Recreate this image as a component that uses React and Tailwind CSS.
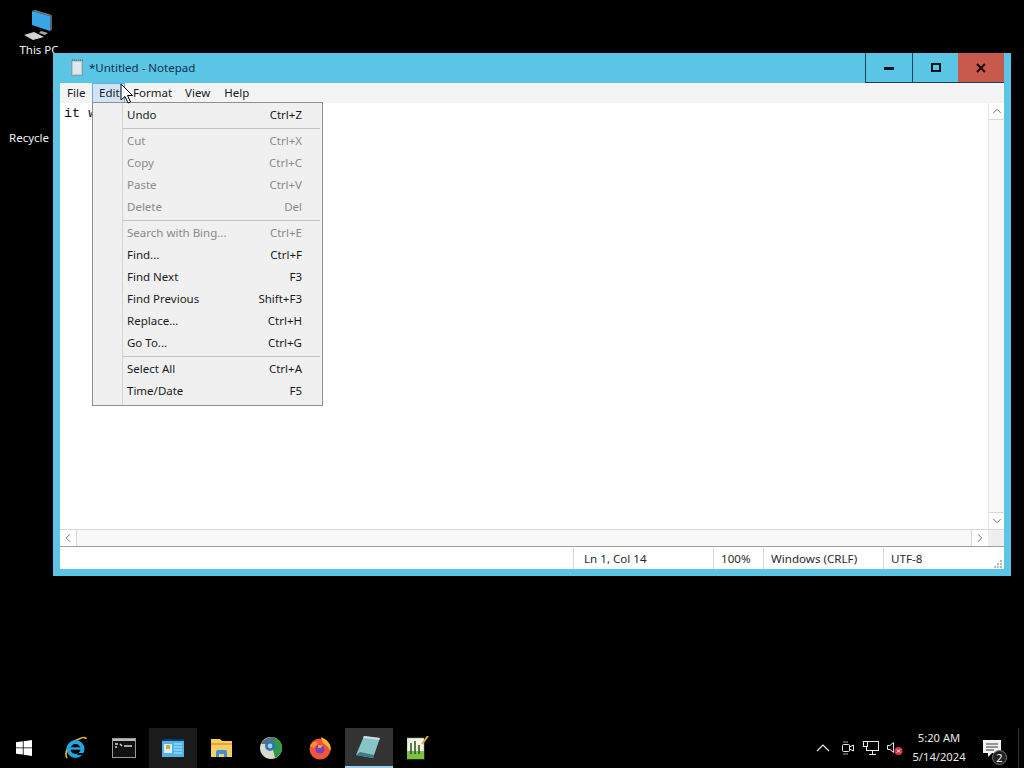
import React from 'react';
import { ChevronUp, ChevronDown, ChevronLeft, ChevronRight } from 'lucide-react';

const uiFont = "[font-family:'Noto_Sans','Open_Sans',sans-serif]";

const menuGroups = [
  [{ label: 'Undo', keys: 'Ctrl+Z' }],
  [
    { label: 'Cut', keys: 'Ctrl+X', disabled: true },
    { label: 'Copy', keys: 'Ctrl+C', disabled: true },
    { label: 'Paste', keys: 'Ctrl+V', disabled: true },
    { label: 'Delete', keys: 'Del', disabled: true },
  ],
  [
    { label: 'Search with Bing...', keys: 'Ctrl+E', disabled: true },
    { label: 'Find...', keys: 'Ctrl+F' },
    { label: 'Find Next', keys: 'F3' },
    { label: 'Find Previous', keys: 'Shift+F3' },
    { label: 'Replace...', keys: 'Ctrl+H' },
    { label: 'Go To...', keys: 'Ctrl+G' },
  ],
  [
    { label: 'Select All', keys: 'Ctrl+A' },
    { label: 'Time/Date', keys: 'F5' },
  ],
];

const PcIcon = () => (
  <svg width="36" height="36" viewBox="0 0 36 36" className="mr-[4px]">
    <path d="M13 3 L31 8 V23 L13 17 Z" fill="#3aa6e8" />
    <path d="M13 3 L16 2 L33 7 L31 8 Z" fill="#6b7c88" />
    <path d="M31 8 L33 7 V22 L31 23 Z" fill="#54636e" />
    <path d="M5 27 L15 24 L25 29 L14 32 Z" fill="#d2d2d2" />
    <path d="M22 23 L29 25 L26 27 L20 25 Z" fill="#a8a8a8" />
  </svg>
);

const NotepadIcon = () => (
  <svg width="16" height="18" viewBox="0 0 16 18">
    <rect x="2.5" y="1.5" width="11" height="15" fill="#b4ccd4" stroke="#8b9ea6" />
    <rect x="4" y="3" width="8" height="12" fill="#dbe8ec" />
    <path d="M3 1 H14" stroke="#555" strokeDasharray="1 1" />
  </svg>
);

const Cursor = () => (
  <svg width="14" height="22" viewBox="0 0 14 22" className="absolute left-[120px] top-[83px]">
    <path d="M1 1 V17 L5 13.5 L8 20 L10.5 19 L7.5 12.5 L12.5 12.5 Z" fill="#fff" stroke="#000" />
  </svg>
);

const MenuBar = () => (
  <div className={`flex h-5 items-center bg-[#f4f4f4] text-[11.5px] text-[#1a1a1a] ${uiFont}`}>
    <span className="w-[32px] pl-[7px]">File</span>
    <span className="flex h-5 w-[33px] items-center border border-[#6aa9dd] bg-[#cfe4f7] pl-[6px]">Edit</span>
    <span className="ml-[8px]">Format</span>
    <span className="ml-[13px]">View</span>
    <span className="ml-[14px]">Help</span>
  </div>
);

const EditMenu = () => (
  <div className={`absolute left-[92px] top-[102px] w-[231px] border border-[#8f8f8f] bg-[#f0f0f0] pb-[3px] pt-[1px] text-[11.5px] ${uiFont}`}>
    <div className="absolute bottom-0 left-[29px] top-0 w-px bg-[#d4d4d4]" />
    {menuGroups.map((group, i) => (
      <div key={i}>
        {i > 0 && <div className="my-[1px] ml-[30px] mr-[2px] h-[2px] border-b border-[#c4c4c4]" />}
        {group.map((item) => (
          <div
            key={item.label}
            className={`flex h-[22px] items-center justify-between pl-[34px] pr-[20px] ${item.disabled ? 'text-[#8a8a8a]' : 'text-[#1a1a1a]'}`}
          >
            <span>{item.label}</span>
            <span>{item.keys}</span>
          </div>
        ))}
      </div>
    ))}
  </div>
);

const ScrollButton = ({ Icon, className = '' }) => (
  <div className={`flex items-center justify-center bg-white text-[#606060] ${className}`}>
    <Icon size={14} strokeWidth={1.5} />
  </div>
);

const StatusBar = () => (
  <div className={`flex h-[23px] items-center border-t border-[#a0a0a0] bg-white pt-px text-[11.6px] text-[#2a2a2a] ${uiFont}`}>
    <div className="w-[513px]" />
    <div className="flex h-full w-[140px] items-center border-l border-[#d8d8d8] pl-[10px]">Ln 1, Col 14</div>
    <div className="flex h-full w-[50px] items-center border-l border-[#d8d8d8] pl-[7px]">100%</div>
    <div className="flex h-full w-[120px] items-center border-l border-[#d8d8d8] pl-[7px]">Windows (CRLF)</div>
    <div className="flex h-full flex-1 items-center border-l border-[#d8d8d8] pl-[7px]">UTF-8</div>
    {/* resize grip */}
    <svg width="10" height="10" viewBox="0 0 10 10" className="mr-px mt-auto" fill="#b8b8b8">
      <rect x="7" y="1" width="2" height="2" />
      <rect x="4" y="4" width="2" height="2" />
      <rect x="7" y="4" width="2" height="2" />
      <rect x="1" y="7" width="2" height="2" />
      <rect x="4" y="7" width="2" height="2" />
      <rect x="7" y="7" width="2" height="2" />
    </svg>
  </div>
);

const NotepadWindow = () => (
  <div className="absolute left-[53px] top-[53px] flex h-[523px] w-[958px] flex-col bg-[#5bc5e6] px-[7px] pb-[7px]">
    <div className="flex h-[30px] items-center">
      <div className="ml-[9px]"><NotepadIcon /></div>
      <span className={`ml-[4px] text-[11.5px] text-[#10304a] ${uiFont}`}>*Untitled - Notepad</span>
      <div className="ml-auto flex h-[30px] items-stretch border-b border-[#1d3f5e]">
        <div className="flex w-[47px] items-center justify-center border-l border-[#1d3f5e]">
          <div className="mt-[2px] h-[3px] w-[10px] bg-[#08121e]" />
        </div>
        <div className="flex w-[46px] items-center justify-center border-l border-[#1d3f5e]">
          <div className="h-[9px] w-[10px] border-2 border-[#08121e]" />
        </div>
        <div className="flex w-[46px] items-center justify-center bg-[#c75a4d]">
          <svg width="10" height="10" viewBox="0 0 10 10">
            <path d="M1 1 L9 9 M9 1 L1 9" stroke="#1a0a0a" strokeWidth="2" />
          </svg>
        </div>
      </div>
    </div>
    <MenuBar />
    <div className="flex min-h-0 flex-1">
      <div className="flex-1 bg-white pl-[4px] pt-[3px] font-['Liberation_Mono',monospace] text-[13.5px] leading-[16px] text-[#111]">
        it w
      </div>
      <div className="flex w-[16px] flex-col border-l border-[#e4e4e4] bg-[#f8f8f8]">
        <ScrollButton Icon={ChevronUp} className="h-[17px] border-b border-[#d8d8d8]" />
        <div className="flex-1" />
        <ScrollButton Icon={ChevronDown} className="h-[17px] border-t border-[#d8d8d8]" />
      </div>
    </div>
    <div className="flex h-[17px] border-t border-[#d8d8d8] bg-[#f8f8f8]">
      <ScrollButton Icon={ChevronLeft} className="w-[17px] border-r border-[#d8d8d8]" />
      <div className="flex-1" />
      <ScrollButton Icon={ChevronRight} className="w-[17px] border-l border-[#d8d8d8]" />
      <div className="w-[16px] bg-[#eeeeee]" />
    </div>
    <StatusBar />
  </div>
);

const WinLogo = () => (
  <svg width="16" height="16" viewBox="0 0 16 16" fill="#fff">
    <path d="M0 2.3 L6.8 1.3 V7.5 H0 Z M7.6 1.2 L16 0 V7.5 H7.6 Z M0 8.3 H6.8 V14.6 L0 13.7 Z M7.6 8.3 H16 V16 L7.6 14.8 Z" />
  </svg>
);

const IeIcon = () => (
  <svg width="24" height="24" viewBox="0 0 24 24">
    <path d="M4 22 C1 17 5 6 16 3 C20 1 23 1 23 3" fill="none" stroke="#e8b923" strokeWidth="1.6" />
    <circle cx="12.5" cy="13" r="7" fill="none" stroke="#22a6e0" strokeWidth="4" />
    <path d="M6 12.5 H19" stroke="#22a6e0" strokeWidth="2.4" />
    <path d="M15 17 H20 L19 19 H14 Z" fill="#000" />
  </svg>
);

const CmdIcon = () => (
  <svg width="24" height="20" viewBox="0 0 24 20">
    <rect x="0.5" y="0.5" width="23" height="19" fill="#111" stroke="#9a9a9a" />
    <rect x="1" y="1" width="22" height="2" fill="#bcbcbc" />
    <path d="M3 6 h3 M3 9 h2 M8 6 l2 2 M12 8 h8" stroke="#d8d8d8" strokeWidth="1.4" />
  </svg>
);

const ServerIcon = () => (
  <svg width="22" height="22" viewBox="0 0 22 22">
    <rect x="0" y="3" width="22" height="17" fill="#4fb4ea" />
    <rect x="0" y="2" width="22" height="2" fill="#123a66" />
    <rect x="2" y="7" width="8" height="9" fill="#d7eefb" />
    <rect x="4" y="8" width="4" height="4" fill="#e0a33a" />
    <path d="M12 7 h8 M12 10 h8 M12 13 h8 M12 16 h8" stroke="#bfe3f8" />
  </svg>
);

const FolderIcon = () => (
  <svg width="22" height="20" viewBox="0 0 22 20">
    <path d="M0 1 H9 L11 3 H21 V19 H0 Z" fill="#f6cf62" />
    <rect x="0" y="5" width="21" height="2" fill="#e6a92e" />
    <path d="M5 19 V14 Q5 12 7 12 H14 Q16 12 16 14 V19 H13 V16 H8 V19 Z" fill="#3f8fd6" />
  </svg>
);

const GlobeIcon = () => (
  <svg width="22" height="22" viewBox="0 0 22 22">
    <circle cx="11" cy="11" r="11" fill="#d9dccb" />
    <path d="M11 0 A11 11 0 0 1 22 11 A11 11 0 0 1 15 21 L13 13 Z" fill="#2f9a48" />
    <path d="M1 7 A11 11 0 0 1 15 1 L12 7 Z" fill="#5a6f80" />
    <circle cx="10" cy="9" r="5" fill="#2f74b8" />
    <circle cx="10" cy="9" r="2.4" fill="#9fd0ee" />
  </svg>
);

const FirefoxIcon = () => (
  <svg width="24" height="24" viewBox="0 0 24 24">
    <circle cx="12" cy="13" r="10.5" fill="#f0543a" />
    <path d="M13 1 C20 4 24 9 22.5 15 C21 12 19 9 15 7 Z" fill="#ffb82e" />
    <path d="M2 10 C4 5 8 5 10 7 L6 12 Z" fill="#ff8a2b" />
    <circle cx="12" cy="13" r="4.6" fill="#7b3fc4" />
    <path d="M10 9 H15 L13 12 H10 Z" fill="#f7a12c" />
  </svg>
);

const NotepadTaskIcon = () => (
  <svg width="26" height="24" viewBox="0 0 26 24" className="mr-[2px]">
    <path d="M9 1 L25 3 L18 23 L1 20 Z" fill="#86c4c8" />
    <path d="M9 1 L25 3 L24 5 L8 3 Z" fill="#d0dcde" />
    <path d="M1 20 L18 23 L19 20 L5 17 Z" fill="#3c7d84" />
  </svg>
);

const ChartIcon = () => (
  <svg width="22" height="24" viewBox="0 0 22 24">
    <rect x="0" y="2" width="17" height="21" fill="#f3f3df" stroke="#9a9a8a" strokeWidth="0.5" />
    <rect x="0" y="15" width="17" height="8" fill="#7cc242" />
    <path d="M4 7 V18 M8 5 V18 M12 9 V18" stroke="#2f5a2a" strokeWidth="1.6" />
    <path d="M15 8 L21 0" stroke="#d8a840" strokeWidth="2" />
  </svg>
);

const taskItems = [
  { key: 'ie', icon: <IeIcon /> },
  { key: 'cmd', icon: <CmdIcon /> },
  { key: 'server', icon: <ServerIcon />, className: 'bg-[#1b1b1b]' },
  { key: 'folder', icon: <FolderIcon /> },
  { key: 'globe', icon: <GlobeIcon /> },
  { key: 'firefox', icon: <FirefoxIcon /> },
  { key: 'notepad', icon: <NotepadTaskIcon />, className: 'bg-[#333333] border-b-2 border-[#9cd0ea]' },
  { key: 'chart', icon: <ChartIcon /> },
];

const TrayIcons = () => (
  <div className="flex items-center gap-[6px] text-white">
    <svg width="16" height="16" viewBox="0 0 16 16" fill="none" stroke="#e8e8e8" strokeWidth="1.2" className="mr-[3px]">
      <path d="M2 11 L8 5 L14 11" />
    </svg>
    <svg width="16" height="16" viewBox="0 0 16 16" fill="none" stroke="#e8e8e8">
      <rect x="2.5" y="4.5" width="7" height="7" rx="1" />
      <path d="M9.5 7 L13.5 5 V11 L9.5 9" />
      <path d="M3 2 H8 M3 14 H8" opacity="0.7" />
    </svg>
    <svg width="18" height="16" viewBox="0 0 18 16" fill="none" stroke="#e8e8e8">
      <rect x="4.5" y="1.5" width="12" height="9" />
      <rect x="1.5" y="1.5" width="4" height="5" fill="#000" />
      <path d="M10.5 10.5 V14 M7 14.5 H14" />
    </svg>
    <svg width="18" height="16" viewBox="0 0 18 16" fill="none" stroke="#e8e8e8">
      <path d="M1.5 5.5 H4 L7.5 2.5 V12.5 L4 9.5 H1.5 Z" />
      <circle cx="12.5" cy="11" r="4" fill="#d8343f" stroke="none" />
      <path d="M11 9.5 L14 12.5 M14 9.5 L11 12.5" stroke="#fff" />
    </svg>
  </div>
);

const Taskbar = () => (
  <div className="absolute inset-x-0 bottom-0 flex h-10 items-stretch bg-black">
    <div className="flex w-[51px] items-center pl-[16px]"><WinLogo /></div>
    <div className="flex items-stretch gap-px">
      {taskItems.map((item) => (
        <div key={item.key} className={`flex w-[48px] items-center justify-center ${item.className || ''}`}>
          {item.icon}
        </div>
      ))}
    </div>
    <div className="ml-auto flex items-center">
      <TrayIcons />
      <div className={`ml-[2px] -mt-[2px] flex w-[66px] flex-col items-center text-[11.2px] leading-[19px] text-[#e8e8e8] ${uiFont}`}>
        <span>5:20 AM</span>
        <span>5/14/2024</span>
      </div>
      <div className="relative ml-[7px] h-6 w-[22px]">
        <svg width="18" height="17" viewBox="0 0 18 17" className="absolute left-[4px] top-[4px]">
          <path d="M0 0 H18 V13 H9 L5 17 V13 H0 Z" fill="#f2f2f2" />
          <path d="M3 4 H15 M3 7 H15 M3 10 H11" stroke="#333" />
        </svg>
        <span className={`absolute left-[13px] top-[14px] flex h-[15px] w-[15px] items-center justify-center rounded-full border border-[#777] bg-[#222] text-[11px] leading-none text-white ${uiFont}`}>2</span>
      </div>
      <div className="ml-[17px] mr-[5px] h-full w-px bg-[#333333]" />
    </div>
  </div>
);

const App = () => (
  <div className="relative h-[768px] w-[1024px] overflow-hidden bg-black">
    <div className={`absolute left-[18px] top-[8px] flex w-[42px] flex-col items-center text-[11.5px] leading-[16px] text-[#f0f0f0] ${uiFont}`}>
      <PcIcon />
      <span className="-mt-[2px] whitespace-nowrap">This PC</span>
    </div>
    <span className={`absolute left-[9px] top-[130px] text-[11.5px] leading-[16px] text-[#f0f0f0] ${uiFont}`}>Recycle</span>
    <NotepadWindow />
    <EditMenu />
    <Cursor />
    <Taskbar />
  </div>
);

export default App;
